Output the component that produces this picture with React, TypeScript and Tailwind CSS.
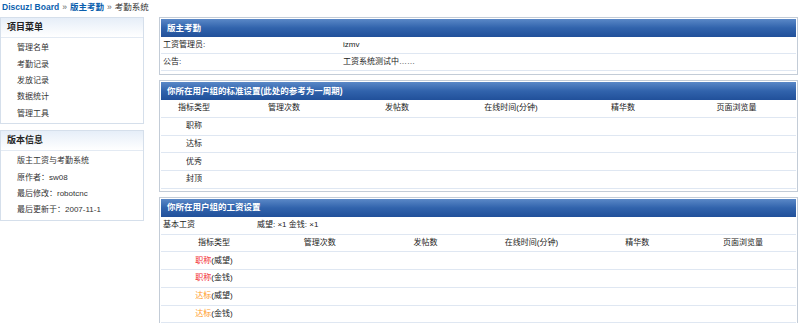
const font = { fontFamily: '"Liberation Sans", "Noto Sans CJK SC", sans-serif' };

const menu = ["管理名单", "考勤记录", "发放记录", "数据统计", "管理工具"];
const info = ["版主工资与考勤系统", "原作者：sw08", "最后修改：robotcnc", "最后更新于：2007-11-1"];
const cols = ["指标类型", "管理次数", "发帖数", "在线时间(分钟)", "精华数", "页面浏览量"];

function SideBox({ title, items }: { title: string; items: string[] }) {
  return (
    <div className="border border-[#d5dfeb] bg-white">
      <div className="flex h-[20px] items-center border-b border-[#e3eaf3] bg-gradient-to-b from-[#e6eef8] to-white px-[6px] text-[9px] font-bold text-[#222]">
        {title}
      </div>
      <div className="pt-[2px] pb-px">
        {items.map((t) => (
          <div key={t} className="flex h-[16.4px] items-center pl-[16px] text-[8px] text-[#333]">
            {t}
          </div>
        ))}
      </div>
    </div>
  );
}

function Panel({ title, children, strip = 2 }: { title: string; children: React.ReactNode; strip?: number }) {
  return (
    <div className="border border-[#c3ccd7] bg-white p-px">
      <div className="flex h-[18px] items-center bg-gradient-to-b from-[#5a88c7] via-[#3163ac] to-[#21509a] px-[6px] text-[8.5px] font-bold text-white">
        {title}
      </div>
      {children}
      <div style={{ height: strip }} />
    </div>
  );
}

const grid2 = "grid grid-cols-[66px_114px_112px_116px_108px_1fr]";
const grid3 = "grid grid-cols-6";

function Row({ children, className = "", short = false }: { children: React.ReactNode; className?: string; short?: boolean }) {
  return (
    <div className={`${short ? "h-[17px]" : "h-[17.75px]"} items-center border-b border-[#dfe7f2] text-[8px] text-[#222] ${className}`}>
      {children}
    </div>
  );
}

export default function App() {
  return (
    <div className="h-[323px] w-[798px] overflow-hidden bg-white" style={font}>
      <div className="flex h-[14px] items-center gap-[3px] px-[2px] text-[8.5px]">
        <span className="font-bold text-[#0b5fae]">Discuz! Board</span>
        <span className="text-[#666]">»</span>
        <span className="font-bold text-[#0b5fae]">版主考勤</span>
        <span className="text-[#666]">»</span>
        <span className="text-[#333]">考勤系统</span>
      </div>

      <div className="mt-[3px] flex items-start">
        <div className="flex w-[144px] flex-col gap-[6px]">
          <SideBox title="项目菜单" items={menu} />
          <SideBox title="版本信息" items={info} />
        </div>

        <div className="ml-[15px] flex w-[639px] flex-col gap-[5px]">
          <Panel title="版主考勤">
            <Row short className="flex">
              <span className="w-[182px] pl-[2px]">工资管理员:</span>
              <span>izmv</span>
            </Row>
            <Row short className="flex">
              <span className="w-[182px] pl-[2px]">公告:</span>
              <span>工资系统测试中……</span>
            </Row>
          </Panel>

          <Panel title="你所在用户组的标准设置(此处的参考为一周期)" strip={1}>
            <Row className={grid2}>
              {cols.map((c) => (
                <span key={c} className="text-center">{c}</span>
              ))}
            </Row>
            {["职称", "达标", "优秀", "封顶"].map((r) => (
              <Row key={r} className={grid2}>
                <span className="text-center">{r}</span>
              </Row>
            ))}
          </Panel>

          <Panel title="你所在用户组的工资设置" strip={20}>
            <Row className="flex">
              <span className="w-[96px] pl-[2px]">基本工资</span>
              <span>威望: ×1 金钱: ×1</span>
            </Row>
            <Row className={grid3}>
              {cols.map((c) => (
                <span key={c} className="text-center">{c}</span>
              ))}
            </Row>
            {[
              ["职称", "(威望)", "text-[#f2262c]"],
              ["职称", "(金钱)", "text-[#f2262c]"],
              ["达标", "(威望)", "text-[#ff9a1e]"],
              ["达标", "(金钱)", "text-[#ff9a1e]"],
            ].map(([a, b, c], i) => (
              <Row key={i} className={grid3}>
                <span className="text-center">
                  <span className={c}>{a}</span>
                  {b}
                </span>
              </Row>
            ))}
          </Panel>
        </div>
      </div>
    </div>
  );
}
